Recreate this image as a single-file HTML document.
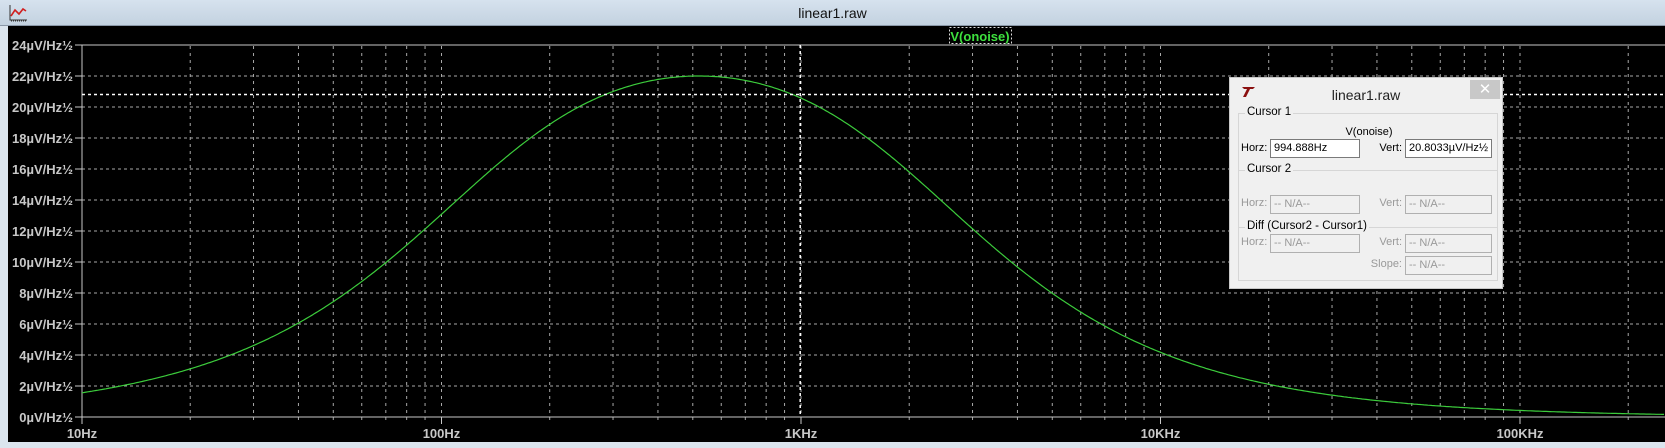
<!DOCTYPE html>
<html><head><meta charset="utf-8"><style>
body{margin:0;width:1665px;height:448px;overflow:hidden;background:#dbe5ee;font-family:"Liberation Sans",sans-serif;position:relative}
.tb{position:absolute;left:0;top:0;width:1665px;height:25px;background:linear-gradient(#d6e2ee,#c3d2e0);border-bottom:1px solid #8a98a8}
.tt{position:absolute;left:0;width:1665px;top:5px;text-align:center;font-size:14px;color:#111}
.plot{position:absolute;left:8px;top:26px;width:1657px;height:416px;background:#000}
.dlg{position:absolute;left:1229px;top:77px;width:272px;height:210px;background:#f0f0f0;border:1px solid #c8c8c8;font-size:11px;color:#000}
.dlg .t{position:absolute;left:0;width:272px;top:9px;text-align:center;font-size:14px;color:#222}
.x{position:absolute;left:240px;top:2px;width:30px;height:19px;background:#c8c8c8;color:#fff;text-align:center;font-size:15px;line-height:19px}
.g{position:absolute;left:8px;width:258px;border-top:1px solid #d6d6d6}
.gl{position:absolute;font-size:11.5px;background:#f0f0f0;padding:0 2px}
.l{position:absolute;font-size:11px}
.r{text-align:right;width:40px}
.in{position:absolute;border:1px solid #7a7a7a;background:#fff;font-size:11px;line-height:17px;padding-left:3px;box-sizing:border-box;height:19px;white-space:nowrap;overflow:hidden}
.dis{background:#f0f0f0;color:#999;border-color:#b0b0b0}
.lg{color:#999}
</style></head><body>
<div class="tb"><div class="tt">linear1.raw</div>
<svg style="position:absolute;left:8px;top:4px" width="20" height="18"><path d="M2 1V16H19" stroke="#333" fill="none"/><path d="M3 12L7 6L11 10L15 5L18 7" stroke="#d02020" stroke-width="1.6" fill="none"/><path d="M3 17h16" stroke="#333" stroke-dasharray="1 1"/></svg></div>
<div class="plot"></div>
<svg id="s" style="position:absolute;left:0;top:0" width="1665" height="448"></svg>
<div class="dlg">
<svg style="position:absolute;left:10px;top:8px" width="16" height="12"><path d="M2 1h13l-2 2h-3l-4 8h-3l4-8h-3z" fill="#8b1010"/></svg>
<div class="t">linear1.raw</div><div class="x">✕</div>
<div class="g" style="top:35px;height:56px;border:1px solid #d6d6d6"></div>
<div class="gl" style="left:15px;top:28px">Cursor 1</div>
<div class="l" style="left:0;width:278px;text-align:center;top:48px">V(onoise)</div>
<div class="l" style="left:11px;top:64px">Horz:</div>
<div class="in" style="left:40px;top:61px;width:90px">994.888Hz</div>
<div class="l r" style="left:132px;top:64px">Vert:</div>
<div class="in" style="left:175px;top:61px;width:87px">20.8033µV/Hz½</div>
<div class="g" style="top:92px;height:56px;border:1px solid #d6d6d6"></div>
<div class="gl" style="left:15px;top:85px">Cursor 2</div>
<div class="l lg" style="left:11px;top:119px">Horz:</div>
<div class="in dis" style="left:40px;top:117px;width:90px">-- N/A--</div>
<div class="l lg r" style="left:132px;top:119px">Vert:</div>
<div class="in dis" style="left:175px;top:117px;width:87px">-- N/A--</div>
<div class="g" style="top:149px;height:52px;border:1px solid #d6d6d6"></div>
<div class="gl" style="left:15px;top:142px">Diff (Cursor2 - Cursor1)</div>
<div class="l lg" style="left:11px;top:158px">Horz:</div>
<div class="in dis" style="left:40px;top:156px;width:90px">-- N/A--</div>
<div class="l lg r" style="left:132px;top:158px">Vert:</div>
<div class="in dis" style="left:175px;top:156px;width:87px">-- N/A--</div>
<div class="l lg r" style="left:132px;top:180px">Slope:</div>
<div class="in dis" style="left:175px;top:178px;width:87px">-- N/A--</div>
</div>
<script>
var s=document.getElementById('s'),h='';
var X0=82,D=359.5,Y0=417,U=15.5,R=1665;
function fx(f){return X0+D*Math.log10(f/10);}
function fy(v){return Y0-v*U;}
var g='#a8a8a8';
for(var d=0;d<5;d++)for(var k=1;k<10;k++){var x=X0+D*(d+Math.log10(k));if(x>R)break;if(d==0&&k==1)continue;
h+='<line x1="'+x+'" y1="46" x2="'+x+'" y2="421" stroke="'+g+'" stroke-dasharray="3 4"/>';}
for(var v=2;v<24;v+=2){var y=fy(v);h+='<line x1="82" y1="'+y+'" x2="'+R+'" y2="'+y+'" stroke="'+g+'" stroke-dasharray="3 3"/>';}
for(var v=0;v<=24;v+=2){var y=fy(v);h+='<line x1="75" y1="'+y+'" x2="82" y2="'+y+'" stroke="#c8c8c8"/><text x="73" y="'+(y+5)+'" text-anchor="end" font-size="13" font-weight="bold" fill="#c8c8c8" font-family="Liberation Sans">'+v+'µV/Hz½</text>';}
h+='<line x1="75" y1="45" x2="'+R+'" y2="45" stroke="#c8c8c8"/><line x1="82" y1="45" x2="82" y2="417" stroke="#c8c8c8"/><line x1="82" y1="417" x2="'+R+'" y2="417" stroke="#c8c8c8"/>';
var L=['10Hz','100Hz','1KHz','10KHz','100KHz'];
for(var d=0;d<5;d++){var x=X0+D*d;h+='<line x1="'+x+'" y1="417" x2="'+x+'" y2="424" stroke="#c8c8c8"/><text x="'+x+'" y="438" text-anchor="middle" font-size="13" font-weight="bold" fill="#c8c8c8" font-family="Liberation Sans">'+L[d]+'</text>';}
var p='';for(var x=82;x<=R;x+=2){var f=10*Math.pow(10,(x-X0)/D),r=f/520,Q=0.27,H=(r/Q)/Math.sqrt(Math.pow(1-r*r,2)+Math.pow(r/Q,2));p+=(p?'L':'M')+x+' '+fy(22*H).toFixed(1);}
h+='<path d="'+p+'" stroke="#3ccc3c" stroke-width="1.2" fill="none"/>';
var cx=fx(994.888),cy=fy(20.8033);
h+='<line x1="'+cx+'" y1="45" x2="'+cx+'" y2="417" stroke="#fff" stroke-width="1.5" stroke-dasharray="3 3"/><line x1="82" y1="'+cy+'" x2="'+R+'" y2="'+cy+'" stroke="#fff" stroke-width="1.5" stroke-dasharray="3 3"/>';
h+='<rect x="949.5" y="27.5" width="62" height="16" fill="#000" stroke="#ddd" stroke-dasharray="2 2"/><text x="980" y="41" text-anchor="middle" font-size="13" font-weight="bold" fill="#3ee03e" font-family="Liberation Sans">V(onoise)</text>';
s.innerHTML=h;
</script>
</body></html>
